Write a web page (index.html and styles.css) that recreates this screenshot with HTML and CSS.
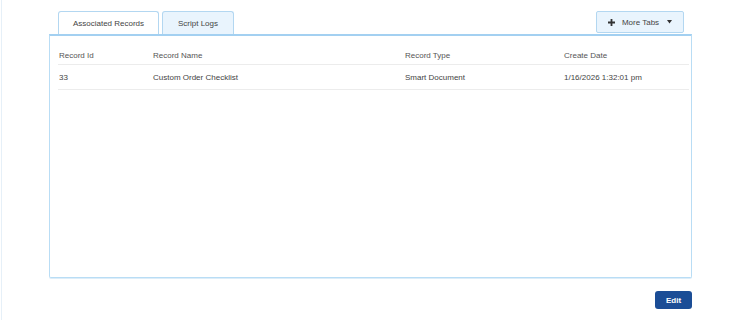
FILE: index.html
```html
<!DOCTYPE html>
<html>
<head>
<meta charset="utf-8">
<link rel="stylesheet" href="styles.css">
</head>
<body>
<div class="frame">
  <div class="content">
    <div class="tabbar">
      <div class="tab tab-active">Associated Records</div>
      <div class="tab tab-plain">Script Logs</div>
      <div class="spacer"></div>
      <div class="more">
        <svg class="plus" width="7" height="7" viewBox="0 0 7 7"><path d="M3.5 0v7M0 3.5h7" stroke="#333" stroke-width="1.8"/></svg>
        <span>More Tabs</span>
        <svg class="caret" width="5" height="4" viewBox="0 0 5 4"><path d="M0 0h5L2.5 3.5z" fill="#333"/></svg>
      </div>
    </div>
    <div class="panel">
      <div class="table">
        <div class="row head">
          <div>Record Id</div><div>Record Name</div><div>Record Type</div><div>Create Date</div>
        </div>
        <div class="row data">
          <div>33</div><div>Custom Order Checklist</div><div>Smart Document</div><div>1/16/2026 1:32:01 pm</div>
        </div>
      </div>
    </div>
    <div class="actions">
      <button class="edit">Edit</button>
    </div>
  </div>
</div>
</body>
</html>
```

FILE: styles.css
```css
html, body {
  margin: 0;
  padding: 0;
  background: #fff;
}
body {
  font-family: "Liberation Sans", Arial, sans-serif;
  font-size: 8px;
  color: #444;
  width: 737px;
  height: 320px;
  overflow: hidden;
}
.frame {
  margin-left: 1px;
  border-left: 1px solid #e6f0f8;
  height: 320px;
  box-sizing: border-box;
}
.content {
  width: 643px;
  padding: 11px 0 0 47px;
}
.tabbar {
  display: flex;
  align-items: flex-end;
  height: 23px;
  padding: 0 8px 0 9px;
  gap: 3px;
}
.tab {
  height: 23px;
  box-sizing: border-box;
  border: 1px solid #b3d7f1;
  border-bottom: none;
  border-radius: 3px 3px 0 0;
  display: flex;
  align-items: center;
  justify-content: center;
  color: #444;
}
.tab-active {
  width: 101px;
  background: #fff;
}
.tab-plain {
  width: 72px;
  background: #e9f4fd;
}
.spacer { flex: 1; }
.more {
  align-self: flex-start;
  width: 88px;
  height: 22px;
  box-sizing: border-box;
  border: 1px solid #b3d7f1;
  border-radius: 2px;
  background: #e9f4fd;
  display: flex;
  align-items: center;
  justify-content: center;
  gap: 5px;
  color: #444;
}
.plus { margin-right: 2px; }
.caret { margin-left: 3px; }
.panel {
  height: 244px;
  box-sizing: border-box;
  border: 1px solid #b9ddf5;
  border-top: 2px solid #a3d0f1;
  border-radius: 0 0 2px 2px;
  box-shadow: 0 1px 0 #dcedf9;
  padding: 10px 2px 0 8px;
}
.table {
  display: flex;
  flex-direction: column;
}
.row {
  display: grid;
  grid-template-columns: 94px 252px 159px 1fr;
  padding-left: 1px;
  align-items: center;
  border-bottom: 1px solid #ececec;
}
.row.head {
  height: 18px;
  color: #555;
}
.row.data {
  height: 24px;
  color: #444;
}
.actions {
  display: flex;
  justify-content: flex-end;
  padding-top: 13px;
}
.edit {
  width: 37px;
  height: 18px;
  border: none;
  border-radius: 3px;
  background: #1b4d96;
  color: #fff;
  font-family: "Liberation Sans", Arial, sans-serif;
  font-size: 8px;
  font-weight: bold;
  padding: 0;
}
```
